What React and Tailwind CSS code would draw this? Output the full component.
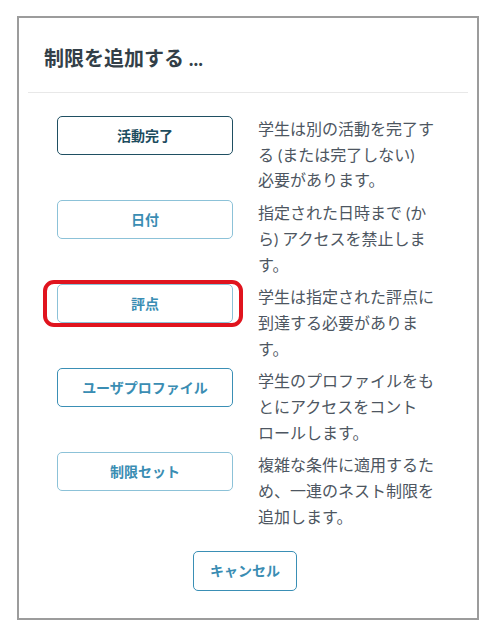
import React from 'react';

const FONT = { fontFamily: 'Lato, "Noto Sans CJK JP", sans-serif' };

const OPTIONS = [
  {
    label: '活動完了',
    desc: ['学生は別の活動を完了す', 'る (または完了しない)', '必要があります。'],
    btn: 'border-[#1f4f62] text-[#1d4c5e]',
  },
  {
    label: '日付',
    desc: ['指定された日時まで (か', 'ら) アクセスを禁止しま', 'す。'],
    btn: 'border-[#8cc2d8] text-[#3a8db3]',
  },
  {
    label: '評点',
    desc: ['学生は指定された評点に', '到達する必要がありま', 'す。'],
    btn: 'border-[#8cc2d8] text-[#3a8db3]',
    marked: true,
  },
  {
    label: 'ユーザプロファイル',
    desc: ['学生のプロファイルをも', 'とにアクセスをコント', 'ロールします。'],
    btn: 'border-[#3a8fb5] text-[#3a8db3]',
  },
  {
    label: '制限セット',
    desc: ['複雑な条件に適用するた', 'め、一連のネスト制限を', '追加します。'],
    btn: 'border-[#8cc2d8] text-[#3a8db3]',
  },
];

const OptionRow = ({ option }) => (
  <div className="flex items-start">
    <div className="relative w-[176px] shrink-0">
      <button
        className={`w-full h-[39px] bg-white border rounded-[5px] text-[14px] font-bold ${option.btn}`}
      >
        {option.label}
      </button>
      {option.marked && (
        <div className="absolute -left-[14px] -right-[10px] -top-[4px] -bottom-[4px] border-[4px] border-[#e0141e] rounded-[11px] pointer-events-none" />
      )}
    </div>
    <p className="ml-[25px] w-[190px] text-[16px] leading-[25.7px] text-[#4d5661]">
      {option.desc.map((line, i) => (
        <span key={i} className="block whitespace-nowrap">{line}</span>
      ))}
    </p>
  </div>
);

export default function App() {
  return (
    <div className="w-[486px] h-[634px] bg-white pt-[16px] pl-[17px]" style={FONT}>
      <div className="w-[462px] h-[604px] border-2 border-[#9c9c9c] bg-white">
        <div className="mx-[9px] border-b border-[#e8e8e8] pl-[16px] pt-[27px] pb-[21px]">
          <h2 className="text-[20px] leading-[26px] font-bold text-[#333f48]">制限を追加する ...</h2>
        </div>
        <div className="pl-[38px] pt-[23px] flex flex-col gap-[7px]">
          {OPTIONS.map((o) => (
            <OptionRow key={o.label} option={o} />
          ))}
        </div>
        <div className="pl-[174px] pt-[21px]">
          <button className="w-[104px] h-[40px] border border-[#3a8fb5] rounded-[5px] text-[14px] font-bold text-[#3a8db3] bg-white">
            キャンセル
          </button>
        </div>
      </div>
    </div>
  );
}
